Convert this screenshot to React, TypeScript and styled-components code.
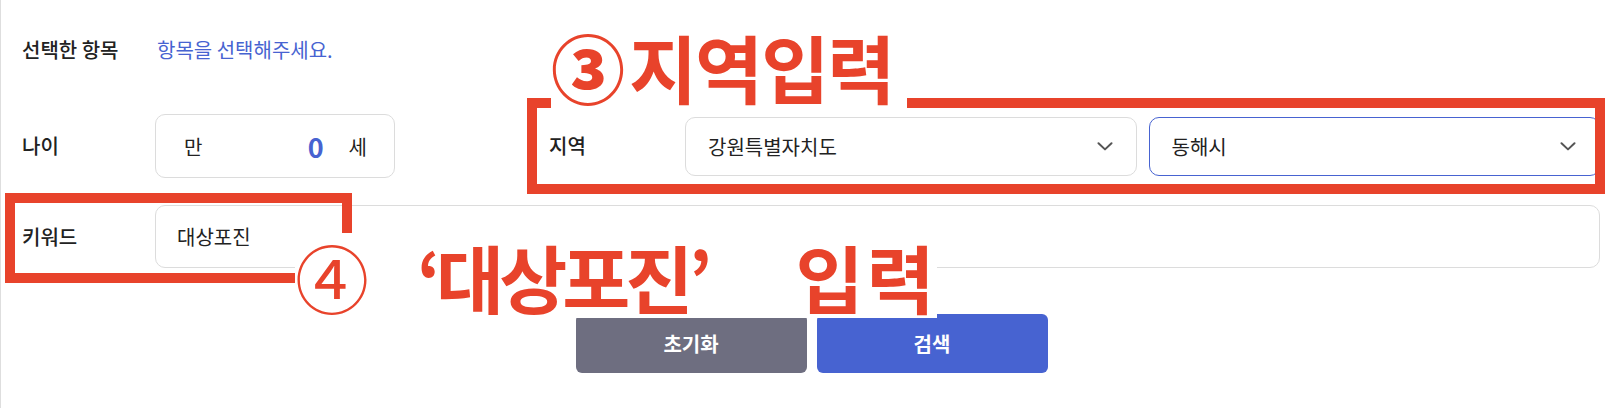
import React from "react";
import styled, { createGlobalStyle } from "styled-components";

const RED = "#E8432B";
const BLUE = "#4763D1";
const FONT = `"Noto Sans CJK KR", "Noto Sans", sans-serif`;

const GlobalStyle = createGlobalStyle`
  html, body { margin: 0; padding: 0; background: #fff; }
  body { font-family: ${FONT}; color: #222; }
  * { box-sizing: border-box; }
`;

const Page = styled.div`
  position: relative;
  width: 1620px;
  height: 408px;
  border-left: 1px solid #dedede;
  padding: 30px 20px 0 21px;
  overflow: hidden;
`;

const Row = styled.div<{ $mt?: number; $h: number }>`
  display: flex;
  align-items: center;
  height: ${(p) => p.$h}px;
  margin-top: ${(p) => p.$mt ?? 0}px;
`;

const Field = styled.div<{ $ml?: number; $grow?: boolean }>`
  display: flex;
  align-items: center;
  height: 100%;
  margin-left: ${(p) => p.$ml ?? 0}px;
  flex: ${(p) => (p.$grow ? "1 1 auto" : "0 0 auto")};
`;

const Label = styled.div<{ $w: number }>`
  width: ${(p) => p.$w}px;
  flex: 0 0 auto;
  font-size: 20px;
  font-weight: 500;
  line-height: 28px;
  color: #222;
`;

const Placeholder = styled.div`
  font-size: 20px;
  line-height: 28px;
  color: ${BLUE};
  padding-left: 2px;
`;

const AgeBox = styled.div`
  width: 240px;
  height: 64px;
  border: 1px solid #dcdcdc;
  border-radius: 10px;
  display: flex;
  align-items: center;
  padding: 0 27px 0 28px;
`;

const AgeUnit = styled.span`
  font-size: 20px;
  color: #222;
`;

const AgeValue = styled.span`
  margin-left: auto;
  margin-right: 25px;
  font-size: 27px;
  font-weight: 700;
  color: ${BLUE};
  line-height: 1;
`;

const SelectGroup = styled.div`
  flex: 1 1 auto;
  display: flex;
  gap: 12px;
`;

const Select = styled.div<{ $active?: boolean }>`
  flex: 1 1 0;
  height: 59px;
  border: 1px solid ${(p) => (p.$active ? BLUE : "#dcdcdc")};
  border-radius: 10px;
  display: flex;
  align-items: center;
  justify-content: space-between;
  padding: 0 23px 0 22px;
  font-size: 20px;
  color: #222;
`;

const KeywordInput = styled.div`
  flex: 1 1 auto;
  height: 63px;
  border: 1px solid #dcdcdc;
  border-radius: 10px;
  display: flex;
  align-items: center;
  padding-left: 21px;
  font-size: 20px;
  color: #222;
`;

const ButtonRow = styled.div`
  display: flex;
  justify-content: center;
  gap: 10px;
  margin-top: 46px;
  padding-left: 1px;
`;

const Button = styled.button<{ $primary?: boolean }>`
  width: 231px;
  height: 59px;
  border: none;
  border-radius: 6px;
  background: ${(p) => (p.$primary ? BLUE : "#6E6E80")};
  color: #fff;
  font-family: ${FONT};
  font-size: 20px;
  font-weight: 700;
`;

const RedFrame = styled.div<{ $x: number; $y: number; $w: number; $h: number }>`
  position: absolute;
  left: ${(p) => p.$x}px;
  top: ${(p) => p.$y}px;
  width: ${(p) => p.$w}px;
  height: ${(p) => p.$h}px;
  border: 10px solid ${RED};
`;

const Callout = styled.div<{ $x: number; $y: number; $w: number; $h: number }>`
  position: absolute;
  left: ${(p) => p.$x}px;
  top: ${(p) => p.$y}px;
  width: ${(p) => p.$w}px;
  height: ${(p) => p.$h}px;
  background: #fff;
  display: flex;
  align-items: center;
  color: ${RED};
  font-family: ${FONT};
  font-size: 74px;
  line-height: 1;
  white-space: nowrap;
`;

const CalloutText = styled.span<{ $ml?: number; $weight?: number; $ls?: number; $dy?: number }>`
  margin-left: ${(p) => p.$ml ?? 0}px;
  font-weight: ${(p) => p.$weight ?? 700};
  letter-spacing: ${(p) => p.$ls ?? -5}px;
  transform: translateY(${(p) => p.$dy ?? 0}px);
`;

const Chevron = () => (
  <svg width="16" height="9" viewBox="0 0 16 9" fill="none">
    <polyline points="1.5,1.2 8,7.4 14.5,1.2" stroke="#555" strokeWidth="2" strokeLinecap="round" strokeLinejoin="round" />
  </svg>
);

export default function App() {
  return (
    <>
      <GlobalStyle />
      <Page>
        <Row $h={40}>
          <Label $w={133}>선택한 항목</Label>
          <Placeholder>항목을 선택해주세요.</Placeholder>
        </Row>

        <Row $h={64} $mt={44}>
          <Field>
            <Label $w={133}>나이</Label>
            <AgeBox>
              <AgeUnit>만</AgeUnit>
              <AgeValue>0</AgeValue>
              <AgeUnit>세</AgeUnit>
            </AgeBox>
          </Field>
          <Field $ml={154} $grow>
            <Label $w={136}>지역</Label>
            <SelectGroup>
              <Select>
                <span>강원특별자치도</span>
                <Chevron />
              </Select>
              <Select $active>
                <span>동해시</span>
                <Chevron />
              </Select>
            </SelectGroup>
          </Field>
        </Row>

        <Row $h={63} $mt={27}>
          <Label $w={133}>키워드</Label>
          <KeywordInput>대상포진</KeywordInput>
        </Row>

        <ButtonRow>
          <Button>초기화</Button>
          <Button $primary>검색</Button>
        </ButtonRow>

        <RedFrame $x={526} $y={98} $w={1078} $h={96} />
        <RedFrame $x={4} $y={193} $w={347} $h={90} />

        <Callout $x={550} $y={28} $w={356} $h={80}>
          <CalloutText $weight={900} $ls={0} $dy={-2}>③</CalloutText>
          <CalloutText $ml={4} $ls={-2} $dy={-2}>지역입력</CalloutText>
        </Callout>

        <Callout $x={294} $y={233} $w={642} $h={85}>
          <CalloutText $weight={400} $ls={0}>④</CalloutText>
          <CalloutText $ml={48}>‘대상포진’</CalloutText>
          <CalloutText $ml={88} $ls={3}>입력</CalloutText>
        </Callout>
      </Page>
    </>
  );
}
